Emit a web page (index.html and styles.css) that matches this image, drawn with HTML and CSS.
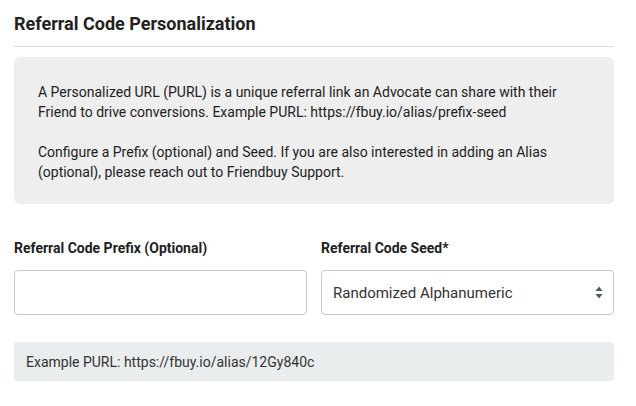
FILE: index.html
```html
<!DOCTYPE html>
<html>
<head>
<meta charset="utf-8">
<link rel="stylesheet" href="styles.css">
</head>
<body>
<div class="page">
  <h2 class="title">Referral Code Personalization</h2>
  <div class="info">
    <p>A Personalized URL (PURL) is a unique referral link an Advocate can share with their Friend to drive conversions. Example PURL: https://fbuy.io/alias/prefix-seed</p>
    <p>Configure a Prefix (optional) and Seed. If you are also interested in adding an Alias (optional), please reach out to Friendbuy Support.</p>
  </div>
  <div class="fields">
    <div class="field">
      <label class="label">Referral Code Prefix (Optional)</label>
      <div class="input"></div>
    </div>
    <div class="field">
      <label class="label">Referral Code Seed*</label>
      <div class="input select">
        <span>Randomized Alphanumeric</span>
        <svg class="arrows" width="8" height="13" viewBox="0 0 8 13"><path d="M4 0.5 L7.5 5 H0.5 Z" fill="#4a5a68"/><path d="M4 12.5 L7.5 8 H0.5 Z" fill="#4a5a68"/></svg>
      </div>
    </div>
  </div>
  <div class="example">Example PURL: https://fbuy.io/alias/12Gy840c</div>
</div>
</body>
</html>
```
FILE: styles.css
```css
* { box-sizing: border-box; }
body { margin: 0; background: #fff; font-family: Roboto, "Liberation Sans", sans-serif; color: #222; }
.page { padding: 12px 22px 0 14px; }
.title { margin: 0; font-size: 18px; line-height: 24px; font-weight: 700; color: #222; padding-bottom: 10px; border-bottom: 1px solid #dcdcdc; }
.info { margin-top: 10px; background: #eeeeee; border-radius: 6px; padding: 25px 24px 22px 24px; font-size: 14px; line-height: 20px; color: #222; }
.info p { margin: 0; }
.info p + p { margin-top: 20px; }
.fields { display: flex; gap: 14px; margin-top: 35px; }
.field { flex: 1; display: flex; flex-direction: column; }
.label { font-size: 14px; font-weight: 700; line-height: 18px; color: #222; margin-bottom: 13px; }
.input { height: 45px; border: 1px solid #c8c8c8; border-radius: 4px; background: #fff; }
.select { display: flex; align-items: center; justify-content: space-between; padding: 0 10px 0 11px; font-size: 15px; color: #333; }
.example { margin-top: 27px; background: #eaedee; border-radius: 3px; height: 39px; display: flex; align-items: center; padding-left: 12px; font-size: 14px; color: #333; }
```
